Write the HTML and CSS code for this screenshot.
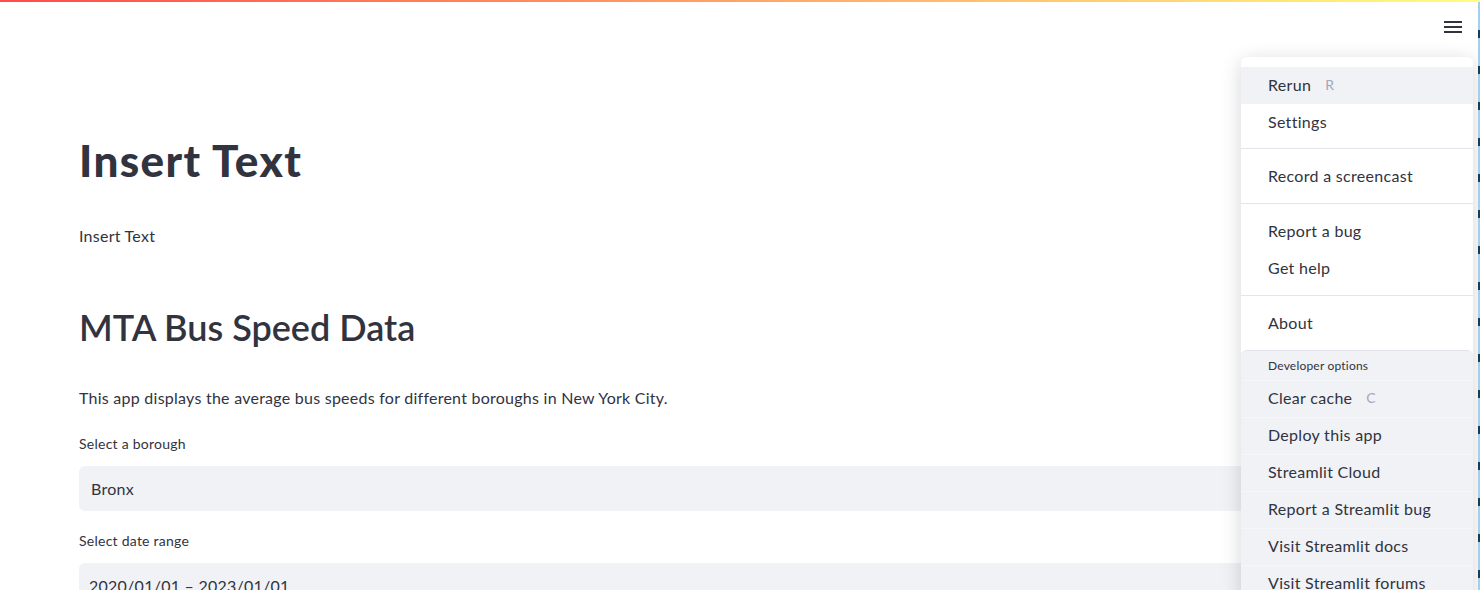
FILE: index.html
```html
<!DOCTYPE html>
<html>
<head>
<meta charset="utf-8">
<link rel="stylesheet" href="styles.css">
</head>
<body>
<div class="decoration"></div>
<header class="topbar">
  <button class="hamburger" aria-label="Main menu">
    <svg width="18" height="12" viewBox="0 0 18 12"><rect x="0" y="0" width="18" height="2" fill="#31333f"/><rect x="0" y="5" width="18" height="2" fill="#31333f"/><rect x="0" y="10" width="18" height="2" fill="#31333f"/></svg>
  </button>
</header>
<main class="main">
  <h1 class="title">Insert Text</h1>
  <p class="text first">Insert Text</p>
  <h2 class="subtitle">MTA Bus Speed Data</h2>
  <p class="text desc">This app displays the average bus speeds for different boroughs in New York City.</p>
  <label class="label">Select a borough</label>
  <div class="field select">Bronx</div>
  <label class="label second">Select date range</label>
  <div class="field date">2020/01/01 – 2023/01/01</div>
</main>

<nav class="menu">
  <ul class="menu-section top">
    <li class="item active">Rerun <span class="key">R</span></li>
    <li class="item">Settings</li>
  </ul>
  <ul class="menu-section">
    <li class="item">Record a screencast</li>
  </ul>
  <ul class="menu-section">
    <li class="item">Report a bug</li>
    <li class="item">Get help</li>
  </ul>
  <ul class="menu-section last">
    <li class="item">About</li>
  </ul>
  <ul class="dev">
    <li class="dev-head">Developer options</li>
    <li class="item dev-item">Clear cache <span class="key">C</span></li>
    <li class="item dev-item">Deploy this app</li>
    <li class="item dev-item">Streamlit Cloud</li>
    <li class="item dev-item">Report a Streamlit bug</li>
    <li class="item dev-item">Visit Streamlit docs</li>
    <li class="item dev-item">Visit Streamlit forums</li>
  </ul>
</nav>
<div class="edge"></div>
</body>
</html>
```

FILE: styles.css
```css
* { box-sizing: border-box; }
html, body { margin: 0; padding: 0; }
body {
  width: 1480px;
  height: 590px;
  overflow: hidden;
  background: #ffffff;
  color: #31333f;
  font-family: Lato, "Noto Sans", sans-serif;
  position: relative;
}
.decoration {
  height: 2px;
  background: linear-gradient(90deg, #ff4b4b, #fffd80);
}
.topbar {
  height: 44px;
  display: flex;
  justify-content: flex-end;
  align-items: flex-start;
  padding-right: 18px;
}
.hamburger {
  border: 0;
  background: transparent;
  padding: 0;
  margin-top: 19px;
  width: 18px;
  height: 12px;
  display: block;
}
.hamburger svg { display: block; }
.main {
  padding: 0 80px 0 79px;
  display: flex;
  flex-direction: column;
  align-items: stretch;
}
.title {
  margin: 88px 0 0;
  font-size: 44px;
  font-weight: 900;
  line-height: 53px;
  letter-spacing: 1.4px;
}
.text {
  margin: 0;
  font-size: 16px;
  line-height: 26px;
  letter-spacing: 0.25px;
}
.first { margin-top: 36px; }
.subtitle {
  margin: 57px 0 0;
  font-size: 36px;
  font-weight: 600;
  line-height: 43px;
}
.desc { margin-top: 36px; }
.label {
  display: block;
  margin-top: 23px;
  font-size: 14px;
  line-height: 20px;
  letter-spacing: 0.25px;
}
.label.second { margin-top: 20px; }
.field {
  margin-top: 12px;
  height: 45px;
  background: #f0f2f6;
  border-radius: 6px;
  font-size: 16px;
  letter-spacing: 0.25px;
  display: flex;
  align-items: center;
  padding-left: 12px;
}
.field.date { padding-left: 10px; }

.menu {
  position: absolute;
  left: 1241px;
  top: 57px;
  width: 232px;
  background: #ffffff;
  border-radius: 6px;
  box-shadow: 0 4px 20px rgba(0, 0, 0, 0.17);
  overflow: hidden;
}
.menu ul { list-style: none; margin: 0; padding: 0; }
.menu-section {
  padding: 9px 0 8px !important;
  border-bottom: 1px solid #e3e5ea;
}
.menu-section.top { padding: 10px 0 7px !important; }
.menu-section.last { border-bottom: 0; padding-bottom: 8px !important; }
.item {
  height: 37px;
  display: flex;
  align-items: center;
  padding: 0 0 3px 27px;
  font-size: 16px;
  letter-spacing: 0.3px;
}
.item.active { background: #f0f2f6; }
.key {
  color: #a3a8b8;
  font-size: 14px;
  margin-left: 14px;
}
.dev {
  background: #f0f2f6;
  border-top: 1px solid #e0e3e9;
  border-radius: 6px 6px 0 0;
}
.dev-head {
  height: 29px;
  padding: 7px 0 0 27px;
  font-size: 12px;
  line-height: 16px;
  letter-spacing: 0.2px;
}
.dev-item {
  height: 37px;
  border-top: 1px solid #f5f6f9;
}
.edge {
  position: absolute;
  right: 0;
  top: 2px;
  width: 2px;
  height: 588px;
  background: repeating-linear-gradient(180deg, #a7cdec 0, #a7cdec 28px, #1e3a4c 28px, #1e3a4c 36px);
}
```
